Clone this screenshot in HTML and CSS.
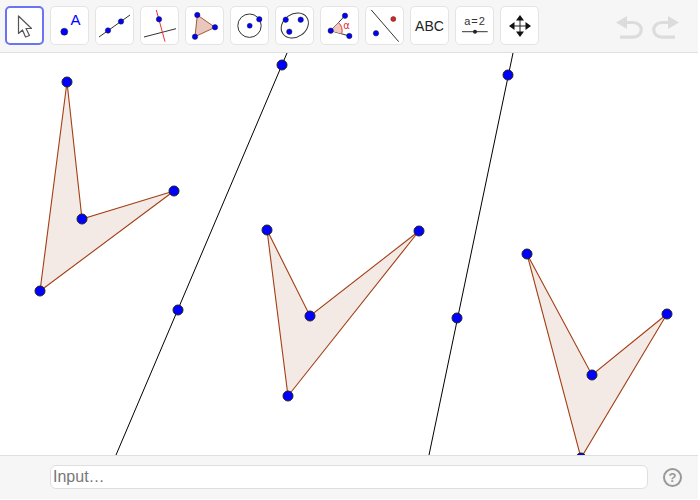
FILE: index.html
```html
<!DOCTYPE html>
<html lang="en">
<head>
<meta charset="utf-8">
<title>Geometry</title>
<link rel="stylesheet" href="styles.css">
</head>
<body>
<div class="app">
  <header class="toolbar">
    <div class="tools">
      <button class="tool selected"><svg viewBox="0 0 39 39"><path d="M13.500 10V27.500L17.500 24L20.500 31L24.500 29.500L21 22.500H26.500Z" fill="#fff" stroke="#555" stroke-width="1.200" stroke-linejoin="round"/></svg></button>
      <button class="tool"><svg viewBox="0 0 39 39"><circle cx="14.300" cy="25.700" r="3.500" fill="#00f" stroke="#222" stroke-width=".5"/><text x="20.500" y="19" class="letter-a">A</text></svg></button>
      <button class="tool"><svg viewBox="0 0 39 39"><path d="M4 31L35 9" stroke="#333" stroke-width="1"/><circle cx="13" cy="24.500" r="2.700" class="pt"/><circle cx="26" cy="15.500" r="2.700" class="pt"/></svg></button>
      <button class="tool"><svg viewBox="0 0 39 39"><path d="M4 31L36 22.700" stroke="#333" stroke-width="1"/><path d="M16.300 4L25 35.700" stroke="#f03030" stroke-width="1"/><circle cx="19" cy="13.300" r="2.700" class="pt"/></svg></button>
      <button class="tool"><svg viewBox="0 0 39 39"><path d="M12.300 9L30 21.300L10 30.700Z" fill="#e8c8bc" stroke="#a5573a" stroke-width="1"/><circle cx="12.300" cy="9" r="2.700" class="pt"/><circle cx="30" cy="21.300" r="2.700" class="pt"/><circle cx="10" cy="30.700" r="2.700" class="pt"/></svg></button>
      <button class="tool"><svg viewBox="0 0 39 39"><circle cx="19.500" cy="19.700" r="11.700" fill="none" stroke="#333" stroke-width="1"/><circle cx="19.700" cy="19.700" r="2.500" class="pt"/><circle cx="29.300" cy="13.300" r="2.700" class="pt"/></svg></button>
      <button class="tool"><svg viewBox="0 0 39 39"><ellipse cx="19.800" cy="19.500" rx="14.500" ry="11.500" transform="rotate(-35 19.800 19.500)" fill="none" stroke="#333" stroke-width="1"/><circle cx="10.700" cy="13.700" r="2.700" class="pt"/><circle cx="25.700" cy="13.700" r="2.700" class="pt"/><circle cx="14.300" cy="25.700" r="2.700" class="pt"/></svg></button>
      <button class="tool"><svg viewBox="0 0 39 39"><path d="M10.700 24.700L25 9.700M10.700 24.700L29.300 30" stroke="#333" stroke-width="1" fill="none"/><path d="M10.700 24.700L18.500 16.500A11.500 11.500 0 0 1 21.700 27.800Z" fill="#f0c8c0"/><path d="M18.500 16.500A11.500 11.500 0 0 1 21.700 27.800" fill="none" stroke="#e04040" stroke-width="1"/><circle cx="10.700" cy="24.700" r="2.700" class="pt"/><circle cx="25" cy="9.700" r="2.700" class="pt"/><circle cx="29.300" cy="30" r="2.700" class="pt"/><text x="23.200" y="23" class="alpha">α</text></svg></button>
      <button class="tool"><svg viewBox="0 0 39 39"><path d="M6.300 4L33.700 35.700" stroke="#333" stroke-width="1"/><circle cx="11" cy="27.300" r="2.700" class="pt"/><circle cx="28.300" cy="13" r="2.500" fill="#e02020" stroke="#333" stroke-width=".5"/></svg></button>
      <button class="tool tool-label">ABC</button>
      <button class="tool"><svg viewBox="0 0 39 39"><text x="20" y="19" class="slider-text">a=2</text><path d="M7 25.700H32.700" stroke="#333" stroke-width="1"/><circle cx="20" cy="25.700" r="2" fill="#222"/></svg></button>
      <button class="tool"><svg viewBox="0 0 39 39"><path d="M20 12V28M12 20H28" stroke="#222" stroke-width="1"/><path d="M20 9L24 14.500H16ZM20 31L24 25.500H16ZM9 20L14.500 16V24ZM31 20L25.500 16V24Z" fill="#111"/></svg></button>
    </div>
    <div class="history">
      <svg class="undo" viewBox="0 0 27 23"><path d="M0 6.500L11 0V13Z" fill="#dcdcdc"/><path d="M10 6.500H17C28 6.500 28 21.200 17 21.200H4" fill="none" stroke="#dcdcdc" stroke-width="3.200"/></svg>
      <svg class="undo" viewBox="0 0 27 23"><path d="M27 6.500L16 0V13Z" fill="#dcdcdc"/><path d="M17 6.500H10C-1 6.500 -1 21.200 10 21.200H23" fill="none" stroke="#dcdcdc" stroke-width="3.200"/></svg>
    </div>
  </header>
  <svg class="canvas" viewBox="0 53 699 402" width="699" height="402">
    <path class="line" d="M287 53L116 455"/>
    <path class="line" d="M513 53L429 455"/>
    <polygon class="poly" points="67,82 82,219 174,191 40,291"/>
    <polygon class="poly" points="267,230 310,316 419,231 288,396"/>
    <polygon class="poly" points="527,254 592,375 667,314 581,458"/>
    <g class="points">
      <circle cx="282" cy="65" r="5"/><circle cx="178" cy="310" r="5"/>
      <circle cx="508" cy="75" r="5"/><circle cx="457" cy="318" r="5"/>
      <circle cx="67" cy="82" r="5"/><circle cx="82" cy="219" r="5"/><circle cx="174" cy="191" r="5"/><circle cx="40" cy="291" r="5"/>
      <circle cx="267" cy="230" r="5"/><circle cx="310" cy="316" r="5"/><circle cx="419" cy="231" r="5"/><circle cx="288" cy="396" r="5"/>
      <circle cx="527" cy="254" r="5"/><circle cx="592" cy="375" r="5"/><circle cx="667" cy="314" r="5"/><circle cx="581" cy="458" r="5"/>
    </g>
  </svg>
  <footer class="inputbar">
    <input class="input" type="text" placeholder="Input…">
    <span class="help">?</span>
  </footer>
</div>
</body>
</html>
```

FILE: styles.css
```css
html, body {
  margin: 0;
  padding: 0;
  background: #fff;
}
.app {
  width: 698px;
  height: 499px;
  display: flex;
  flex-direction: column;
  font-family: "Liberation Sans", Arial, sans-serif;
  overflow: hidden;
}
.toolbar {
  box-sizing: border-box;
  height: 53px;
  flex: none;
  background: #f6f6f6;
  border-bottom: 1px solid #dfdfdf;
  display: flex;
  justify-content: space-between;
  padding: 6px 0 0 5px;
}
.tools {
  display: flex;
  gap: 6px;
  height: 39px;
}
.tool {
  box-sizing: border-box;
  width: 39px;
  height: 39px;
  padding: 0;
  background: #fff;
  border: 1px solid #e4e4e4;
  border-radius: 5px;
  display: flex;
  align-items: center;
  justify-content: center;
}
.tool svg {
  width: 39px;
  height: 39px;
  flex: none;
}
.selected {
  border: 2px solid #6b72f5;
}
.tool-label {
  font-family: "Liberation Sans", Arial, sans-serif;
  font-size: 14px;
  color: #222;
}
.pt {
  fill: #00f;
  stroke: #222;
  stroke-width: .5;
}
.letter-a {
  font: 15px "Liberation Sans", Arial, sans-serif;
  fill: #00f;
}
.alpha {
  font: 10px "DejaVu Sans", sans-serif;
  fill: #e03030;
}
.slider-text {
  font: 11px "Liberation Sans", Arial, sans-serif;
  letter-spacing: 1px;
  fill: #333;
  text-anchor: middle;
}
.history {
  display: flex;
  gap: 9px;
  padding: 10px 19px 0 0;
}
.undo {
  width: 27px;
  height: 23px;
}
.canvas {
  display: block;
  flex: none;
  background: #fff;
}
.line {
  fill: none;
  stroke: #000;
  stroke-width: 1;
}
.poly {
  fill: #f3e9e5;
  stroke: #a33e15;
  stroke-width: 1.100;
}
.points circle {
  fill: #00f;
  stroke: #222;
  stroke-width: 1;
}
.inputbar {
  flex: 1;
  box-sizing: border-box;
  background: #f6f6f6;
  border-top: 1px solid #dfdfdf;
  display: flex;
  align-items: flex-start;
  padding: 9px 14px 0 50px;
  gap: 15px;
}
.input {
  box-sizing: border-box;
  width: 598px;
  height: 24px;
  padding: 0 2px;
  border: 1px solid #dfdfdf;
  border-radius: 6px;
  background: #fff;
  outline: none;
  font: 16px "Liberation Sans", Arial, sans-serif;
}
.input::placeholder {
  color: #777;
  opacity: 1;
}
.help {
  box-sizing: border-box;
  width: 19px;
  height: 19px;
  margin-top: 3px;
  border: 2px solid #999;
  border-radius: 50%;
  color: #999;
  font-size: 13px;
  font-weight: bold;
  line-height: 15px;
  text-align: center;
}
```
